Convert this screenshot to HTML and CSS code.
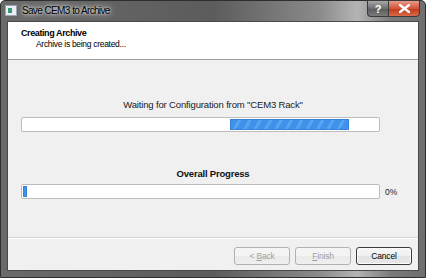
FILE: index.html
```html
<!DOCTYPE html>
<html lang="en">
<head>
    <meta charset="UTF-8">
    <title>Save CEM3 to Archive</title>
    <link rel="stylesheet" href="styles.css">
</head>
<body>
    <div class="window">
        <div class="titlebar">
            <div class="title-icon"><div class="title-icon-mark"></div></div>
            <div class="title-text">Save CEM3 to Archive</div>
            <div class="caption-btns">
                <div class="cap-btn cap-help">?</div>
                <div class="cap-btn cap-close">
                    <svg width="11" height="9" viewBox="0 0 11 9">
                        <path d="M1 1 L10 8 M10 1 L1 8" stroke="#fff" stroke-width="2.4" stroke-linecap="square"/>
                    </svg>
                </div>
            </div>
        </div>
        <div class="client">
            <div class="header">
                <div class="header-title">Creating Archive</div>
                <div class="header-sub">Archive is being created...</div>
            </div>
            <div class="body">
                <div class="step-label">Waiting for Configuration from "CEM3 Rack"</div>
                <div class="bar-row">
                    <div class="bar">
                        <div class="chunk chunk-busy"></div>
                    </div>
                </div>
                <div class="overall-label">Overall Progress</div>
                <div class="bar-row">
                    <div class="bar">
                        <div class="chunk chunk-start"></div>
                    </div>
                    <div class="percent">0%</div>
                </div>
            </div>
            <div class="footer">
                <button class="btn" disabled>&lt; <u>B</u>ack</button>
                <button class="btn" disabled><u>F</u>inish</button>
                <button class="btn btn-default">Cancel</button>
            </div>
        </div>
    </div>
</body>
</html>
```

FILE: styles.css
```css
* {
    margin: 0;
    padding: 0;
    box-sizing: border-box;
}

body {
    width: 426px;
    height: 278px;
    overflow: hidden;
    font-family: 'Liberation Sans', Arial, sans-serif;
    font-size: 11px;
    background: #fff;
}

.window {
    width: 426px;
    height: 278px;
    display: flex;
    flex-direction: column;
    border: 1px solid #2e2e2e;
    border-radius: 5px 5px 0 0;
    background: linear-gradient(to right, #6a6a6a 0%, #5c5c5c 50%, #8a8a8a 75%, #b4b4b4 84%, #7a7a7a 92%, #6e6e6e 100%);
    padding: 0 6px 6px 6px;
}

.titlebar {
    height: 19px;
    display: flex;
    align-items: center;
    position: relative;
}

.title-icon {
    width: 12px;
    height: 11px;
    margin-left: -2px;
    margin-right: 5px;
    background: #e8eef4;
    border: 1px solid #9aa6b2;
    display: flex;
    align-items: center;
    padding-left: 2px;
}

.title-icon-mark {
    width: 4px;
    height: 5px;
    background: #3a9a78;
}

.title-text {
    color: #000;
    font-size: 10px;
    letter-spacing: -0.7px;
    word-spacing: 0.5px;
    text-shadow: 0 0 6px rgba(255, 255, 255, 0.9), 0 0 3px rgba(255, 255, 255, 0.9);
}

.caption-btns {
    position: absolute;
    top: -1px;
    right: -1px;
    display: flex;
}

.cap-btn {
    height: 17px;
    display: flex;
    align-items: center;
    justify-content: center;
    border: 1px solid #3a3a3a;
    color: #fff;
    font-weight: bold;
    font-size: 11px;
}

.cap-help {
    width: 21px;
    border-radius: 0 0 0 4px;
    border-right: none;
    background: linear-gradient(to bottom, #a8a8a8, #6e6e6e 50%, #5a5a5a 51%, #7a7a7a);
}

.cap-close {
    width: 32px;
    border-radius: 0 0 4px 0;
    background: linear-gradient(to bottom, #e89a88, #d0553a 50%, #c03818 51%, #d86a48);
}

.client {
    flex: 1;
    display: flex;
    flex-direction: column;
    background: #f0f0f0;
    border: 1px solid #4a4a4a;
    margin-top: 1px;
}

.header {
    height: 38px;
    background: #fff;
    border-bottom: 1px solid #a0a0a0;
    padding: 6px 0 0 13px;
    font-size: 8.5px;
    letter-spacing: -0.3px;
    color: #000;
}

.header-title {
    font-weight: bold;
    font-size: 9px;
    letter-spacing: -0.4px;
    line-height: 11px;
}

.header-sub {
    padding-left: 15px;
    line-height: 11px;
}

.body {
    flex: 1;
    display: flex;
    flex-direction: column;
    padding-top: 39px;
}

.step-label {
    text-align: center;
    color: #1a1a1a;
    font-size: 9.5px;
    letter-spacing: -0.15px;
    line-height: 12px;
    margin-bottom: 6px;
}

.bar-row {
    display: flex;
    align-items: center;
    gap: 5px;
    padding-left: 13px;
}

.bar {
    width: 359px;
    height: 15px;
    background: #fff;
    border: 1px solid #bcbcbc;
    border-radius: 2px;
    display: flex;
    padding: 1px;
}

.chunk {
    height: 100%;
    border: 1px solid #3582d8;
    background: repeating-linear-gradient(120deg, #3f91ea 0px, #3f91ea 6px, #58a3f2 6px, #58a3f2 9px);
}

.chunk-busy {
    width: 119px;
    margin-left: 207px;
}

.chunk-start {
    width: 4px;
}

.overall-label {
    text-align: center;
    font-weight: bold;
    font-size: 9.5px;
    letter-spacing: -0.2px;
    color: #111;
    line-height: 12px;
    margin-top: 36px;
    margin-bottom: 4px;
}

.percent {
    font-size: 8.5px;
    color: #222;
}

.footer {
    height: 33px;
    border-top: 1px solid #d5d5d5;
    box-shadow: inset 0 1px 0 #fff;
    display: flex;
    justify-content: flex-end;
    align-items: flex-start;
    gap: 5px;
    padding: 9px 6px 0 0;
}

.btn {
    width: 56px;
    height: 18px;
    font-family: 'Liberation Sans', Arial, sans-serif;
    font-size: 8.5px;
    letter-spacing: -0.2px;
    border: 1px solid #adb2b5;
    border-radius: 3px;
    background: linear-gradient(to bottom, #f4f4f4, #f4f4f4 50%, #eaeaea 51%, #efefef);
    color: #a0a0a0;
}

.btn u {
    text-decoration: underline;
}

.btn-default {
    border-color: #3c3c3c;
    color: #000;
    background: linear-gradient(to bottom, #f7f7f7, #efefef 50%, #e3e3e3 51%, #e8e8e8);
    box-shadow: inset 0 0 0 1px #fafafa;
}
```
